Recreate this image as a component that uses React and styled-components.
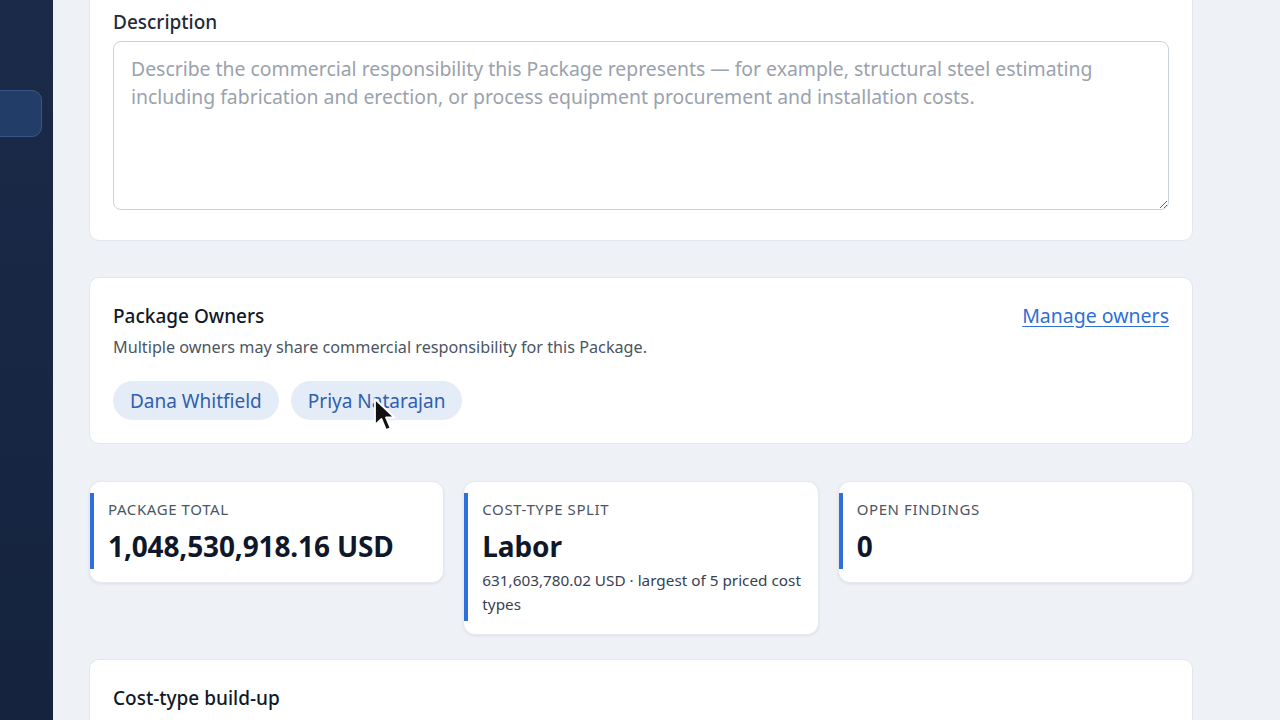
import React from "react";
import styled, { createGlobalStyle } from "styled-components";

const GlobalStyle = createGlobalStyle`
  html, body {
    margin: 0;
    padding: 0;
    height: 100%;
    overflow: hidden;
  }
  body {
    background: #eef1f6;
    font-family: "Noto Sans", "Open Sans", sans-serif;
    color: #1e293b;
  }
`;

const Layout = styled.div`
  display: flex;
  height: 720px;
  overflow: hidden;
`;

const Sidebar = styled.aside`
  width: 53px;
  flex-shrink: 0;
  background: linear-gradient(180deg, #1a2a48 0%, #15233e 100%);
  padding-top: 90px;
  overflow: hidden;
`;

const NavItem = styled.div`
  width: 61px;
  height: 45px;
  margin-left: -21px;
  border-radius: 10px;
  background: #223d67;
  border: 1px solid #38558a;
`;

const Main = styled.main`
  flex: 1;
  padding: 0 87px 0 36px;
  display: flex;
  flex-direction: column;
  gap: 36px;
`;

const Card = styled.section`
  background: #fff;
  border: 1px solid #e2e7ef;
  border-radius: 10px;
  padding: ${(p) => p.pad || "24px 23px"};
  margin-top: ${(p) => p.mt || "0"};
`;

const FieldLabel = styled.label`
  display: block;
  font-size: 19px;
  line-height: 24px;
  font-weight: 500;
  color: #1f2a3c;
  margin-bottom: 7px;
`;

const TextArea = styled.textarea`
  display: block;
  box-sizing: border-box;
  width: 100%;
  height: 169px;
  resize: vertical;
  border: 1px solid #c8d2df;
  border-radius: 8px;
  padding: 13px 17px;
  font-family: "Noto Sans", "Open Sans", sans-serif;
  font-size: 19.4px;
  line-height: 28px;
  color: #1e293b;
  outline: none;

  &::placeholder {
    color: #9aa2ad;
  }
`;

const CardHead = styled.div`
  display: flex;
  justify-content: space-between;
  align-items: flex-start;
`;

const CardTitle = styled.h3`
  margin: 0;
  font-size: 19px;
  line-height: 24px;
  font-weight: 500;
  color: #111827;
`;

const ManageLink = styled.a`
  font-size: 19.5px;
  line-height: 24px;
  color: #2f6fd6;
  text-decoration: underline;
  text-underline-offset: 3px;
  cursor: pointer;
`;

const Subtitle = styled.p`
  margin: 9px 0 0;
  font-size: 16.2px;
  line-height: 20px;
  color: #4b5563;
`;

const Chips = styled.div`
  display: flex;
  gap: 12px;
  margin-top: 24px;
  position: relative;
`;

const Chip = styled.span`
  display: inline-flex;
  align-items: center;
  height: 39px;
  padding: 0 17px;
  border-radius: 20px;
  background: #e4ecf8;
  color: #2f5fae;
  font-size: 19px;
`;

const Cursor = styled.svg`
  position: absolute;
  left: 260px;
  top: 16px;
  width: 24px;
  height: 36px;
  pointer-events: none;
`;

const Stats = styled.div`
  display: grid;
  grid-template-columns: repeat(3, 1fr);
  gap: 19px;
  align-items: start;
  margin-top: 1px;
`;

const StatCard = styled.div`
  background: #fff;
  border-radius: 12px;
  border: 1px solid #e6eaf0;
  box-shadow: 0 1px 3px rgba(15, 23, 42, 0.08);
  padding: 11px 0 13px;
`;

const StatBody = styled.div`
  border-left: 4px solid #2f6fdb;
  padding: 6px 16px 5px 14px;
`;

const StatLabel = styled.div`
  font-size: 15px;
  line-height: 20px;
  letter-spacing: 0.04em;
  text-transform: uppercase;
  color: #4b5563;
`;

const StatValue = styled.div`
  margin-top: 9px;
  font-size: 28px;
  line-height: 36px;
  font-weight: 700;
  color: #0f172a;
  letter-spacing: -0.005em;
`;

const StatNote = styled.div`
  margin-top: 4px;
  font-size: 15.3px;
  line-height: 24px;
  color: #374151;
`;

const Stat = ({ label, value, note }) => (
  <StatCard>
    <StatBody>
      <StatLabel>{label}</StatLabel>
      <StatValue>{value}</StatValue>
      {note && <StatNote>{note}</StatNote>}
    </StatBody>
  </StatCard>
);

export default function App() {
  return (
    <>
      <GlobalStyle />
      <Layout>
        <Sidebar>
          <NavItem />
        </Sidebar>
        <Main>
          <Card mt="-16px" pad="25px 23px 30px">
            <FieldLabel htmlFor="desc">Description</FieldLabel>
            <TextArea
              id="desc"
              placeholder="Describe the commercial responsibility this Package represents — for example, structural steel estimating including fabrication and erection, or process equipment procurement and installation costs."
            />
          </Card>

          <Card pad="26px 23px 23px">
            <CardHead>
              <CardTitle>Package Owners</CardTitle>
              <ManageLink>Manage owners</ManageLink>
            </CardHead>
            <Subtitle>Multiple owners may share commercial responsibility for this Package.</Subtitle>
            <Chips>
              <Chip>Dana Whitfield</Chip>
              <Chip>Priya Natarajan</Chip>
              <Cursor viewBox="0 0 24 36">
                <path
                  d="M2 2 L2 28 L8.5 22 L13 33 L17.5 31 L13 20.5 L21.5 20.5 Z"
                  fill="#111"
                  stroke="#fff"
                  strokeWidth="1.8"
                  strokeLinejoin="round"
                />
              </Cursor>
            </Chips>
          </Card>

          <Stats>
            <Stat label="Package Total" value="1,048,530,918.16 USD" />
            <Stat
              label="Cost-type split"
              value="Labor"
              note="631,603,780.02 USD · largest of 5 priced cost types"
            />
            <Stat label="Open Findings" value="0" />
          </Stats>

          <Card mt="-12px" pad="26px 23px">
            <CardTitle>Cost-type build-up</CardTitle>
          </Card>
        </Main>
      </Layout>
    </>
  );
}
